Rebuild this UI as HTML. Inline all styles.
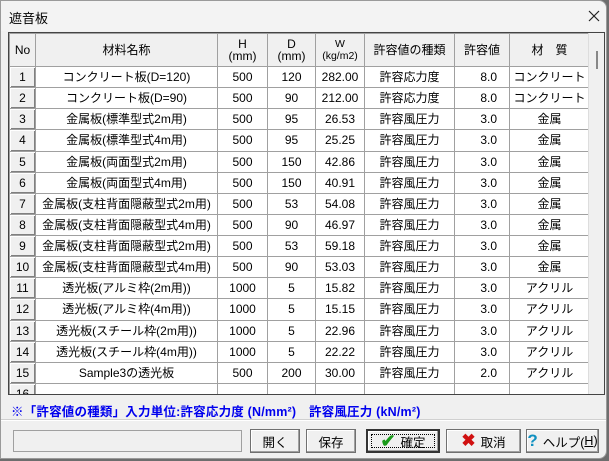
<!DOCTYPE html>
<html><head><meta charset="utf-8"><style>
*{box-sizing:border-box;margin:0;padding:0}
body{width:609px;height:461px;background:#6d6d6d;font-family:"Liberation Sans","Noto Sans CJK JP",sans-serif;font-size:12px;color:#000;position:relative;overflow:hidden}
.win{position:absolute;left:0;top:0;width:607px;height:459px;background:#f0f0f0;border:1px solid #9a9a9a;border-radius:0 8px 8px 0}
.title{position:absolute;left:0;top:0;width:605px;height:30px;background:#f3f3f3;border-radius:0 8px 0 0}
.title span{position:absolute;left:8px;top:7px;font-size:13px}
.title svg{position:absolute;left:587px;top:9px}
.grid{position:absolute;left:7px;top:31px;width:597px;height:363px;border:1px solid #444;background:#fff;overflow:hidden}
table{border-collapse:collapse;table-layout:fixed;position:absolute;left:0;top:0;width:580px}
td{border:1px solid #a0a0a0;height:21.14px;text-align:center;white-space:nowrap;overflow:hidden;font-size:12px;padding:0;line-height:14px}
tr.h td{height:33px;background:#f0f0f0;font-size:12px;line-height:12px}
td.n{background:#f0f0f0;box-shadow:inset 1px 1px 0 #fff,inset -1px -1px 0 #808080}
td.r{text-align:right;padding-right:12px}
.sb{position:absolute;left:579px;top:0;width:17px;height:362px;background:#f0f0f0;border-left:1px solid #ddd}
.sb i{position:absolute;left:7px;top:18px;width:2px;height:18px;background:#888}
.note{position:absolute;left:10px;top:400px;color:#0000ee;font-weight:bold;font-size:12.5px;letter-spacing:0.2px}
.sep{position:absolute;left:0;top:419px;width:605px;border-top:1px solid #fff;height:1px;box-shadow:0 -1px 0 #d0d0d0}
.tf{position:absolute;left:12px;top:429px;width:229px;height:22px;border:1px solid #a0a0a0;background:#f0f0f0}
.btn{position:absolute;top:428px;height:24px;background:#f0f0f0;border:1px solid #707070;box-shadow:inset -1px -1px 0 #a0a0a0,inset 1px 1px 0 #fff;display:flex;align-items:center;justify-content:center;font-size:12.5px}
.def{border:2px solid #333}
.def:after{content:"";position:absolute;left:3px;top:3px;right:3px;bottom:3px;border:1px dotted #000}
</style></head><body>
<div class="win">
<div class="title"><span>遮音板</span><svg width="12" height="12" viewBox="0 0 12 12"><path d="M1 1L11 11M11 1L1 11" stroke="#222" stroke-width="1.2"/></svg></div>
<div class="grid">
<table>
<colgroup><col style="width:26px"><col style="width:182px"><col style="width:50px"><col style="width:48px"><col style="width:49px"><col style="width:90px"><col style="width:55px"><col style="width:80px"></colgroup>
<tr class="h"><td>No</td><td>材料名称</td><td>H<br>(mm)</td><td>D<br>(mm)</td><td style="font-size:10.5px">W<br>(kg/m2)</td><td>許容値の種類</td><td>許容値</td><td>材　質</td></tr>
<tr><td class="n">1</td><td>コンクリート板(D=120)</td><td>500</td><td>120</td><td>282.00</td><td>許容応力度</td><td class="r">8.0</td><td>コンクリート</td></tr>
<tr><td class="n">2</td><td>コンクリート板(D=90)</td><td>500</td><td>90</td><td>212.00</td><td>許容応力度</td><td class="r">8.0</td><td>コンクリート</td></tr>
<tr><td class="n">3</td><td>金属板(標準型式2m用)</td><td>500</td><td>95</td><td>26.53</td><td>許容風圧力</td><td class="r">3.0</td><td>金属</td></tr>
<tr><td class="n">4</td><td>金属板(標準型式4m用)</td><td>500</td><td>95</td><td>25.25</td><td>許容風圧力</td><td class="r">3.0</td><td>金属</td></tr>
<tr><td class="n">5</td><td>金属板(両面型式2m用)</td><td>500</td><td>150</td><td>42.86</td><td>許容風圧力</td><td class="r">3.0</td><td>金属</td></tr>
<tr><td class="n">6</td><td>金属板(両面型式4m用)</td><td>500</td><td>150</td><td>40.91</td><td>許容風圧力</td><td class="r">3.0</td><td>金属</td></tr>
<tr><td class="n">7</td><td>金属板(支柱背面隠蔽型式2m用)</td><td>500</td><td>53</td><td>54.08</td><td>許容風圧力</td><td class="r">3.0</td><td>金属</td></tr>
<tr><td class="n">8</td><td>金属板(支柱背面隠蔽型式4m用)</td><td>500</td><td>90</td><td>46.97</td><td>許容風圧力</td><td class="r">3.0</td><td>金属</td></tr>
<tr><td class="n">9</td><td>金属板(支柱背面隠蔽型式2m用)</td><td>500</td><td>53</td><td>59.18</td><td>許容風圧力</td><td class="r">3.0</td><td>金属</td></tr>
<tr><td class="n">10</td><td>金属板(支柱背面隠蔽型式4m用)</td><td>500</td><td>90</td><td>53.03</td><td>許容風圧力</td><td class="r">3.0</td><td>金属</td></tr>
<tr><td class="n">11</td><td>透光板(アルミ枠(2m用))</td><td>1000</td><td>5</td><td>15.82</td><td>許容風圧力</td><td class="r">3.0</td><td>アクリル</td></tr>
<tr><td class="n">12</td><td>透光板(アルミ枠(4m用))</td><td>1000</td><td>5</td><td>15.15</td><td>許容風圧力</td><td class="r">3.0</td><td>アクリル</td></tr>
<tr><td class="n">13</td><td>透光板(スチール枠(2m用))</td><td>1000</td><td>5</td><td>22.96</td><td>許容風圧力</td><td class="r">3.0</td><td>アクリル</td></tr>
<tr><td class="n">14</td><td>透光板(スチール枠(4m用))</td><td>1000</td><td>5</td><td>22.22</td><td>許容風圧力</td><td class="r">3.0</td><td>アクリル</td></tr>
<tr><td class="n">15</td><td>Sample3の透光板</td><td>500</td><td>200</td><td>30.00</td><td>許容風圧力</td><td class="r">2.0</td><td>アクリル</td></tr>
<tr><td class="n">16</td><td></td><td></td><td></td><td></td><td></td><td></td><td></td></tr>
</table>
<div class="sb"><i></i></div>
</div>
<div class="note">※「許容値の種類」入力単位:許容応力度 (N/mm²)　許容風圧力 (kN/m²)</div>
<div class="sep"></div>
<div class="tf"></div>
<div class="btn" style="left:249px;width:50px">開く</div>
<div class="btn" style="left:305px;width:50px">保存</div>
<div class="btn def" style="left:365px;width:74px"><span style="color:#1a9a1a;font-size:18px;font-weight:bold;margin-right:5px">✔</span>確定</div>
<div class="btn" style="left:445px;width:75px"><span style="color:#d01010;font-size:17px;font-weight:bold;margin-right:5px">✖</span>取消</div>
<div class="btn" style="left:525px;width:73px"><span style="color:#1090c0;font-size:17px;font-weight:bold;margin-right:5px">?</span>ヘルプ(<u>H</u>)</div>
</div>
</body></html>
